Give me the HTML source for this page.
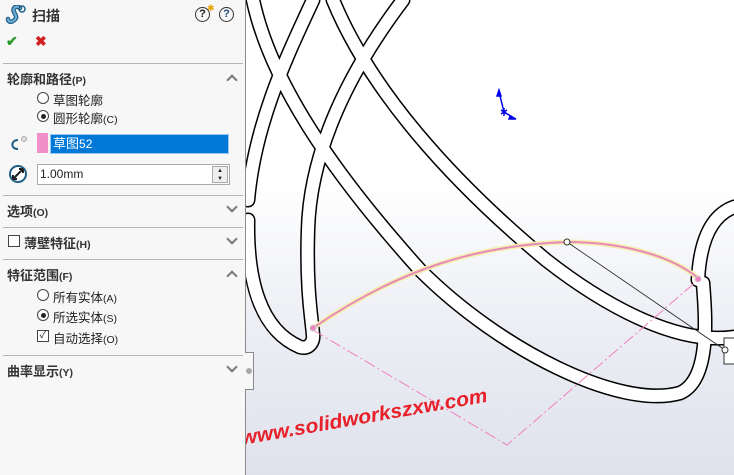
<!DOCTYPE html>
<html><head><meta charset="utf-8"><style>
*{margin:0;padding:0;box-sizing:border-box}
body{width:734px;height:475px;overflow:hidden;position:relative;font-family:"Liberation Sans","Noto Sans CJK SC",sans-serif;font-size:12.5px;color:#222}
#vp{position:absolute;left:246px;top:0;width:488px;height:475px;background:linear-gradient(#fff 0,#fff 180px,#eceef4 330px,#dfe2ec 475px)}
#panel{position:absolute;left:0;top:0;width:246px;height:475px;background:#f7f7f7;border-right:1px solid #8a8a8a}
#tab{position:absolute;left:245px;top:352px;width:9px;height:38px;background:#f7f7f7;border:1px solid #8a8a8a;border-left:none}
#tab i{position:absolute;left:1px;top:15px;width:6px;height:6px;border-radius:50%;background:#aaa}
.t{position:absolute;white-space:nowrap}
.b{font-weight:bold;color:#333;font-size:13px}
.s{font-size:10.5px;font-weight:bold}
.hr{position:absolute;left:3px;width:240px;height:1px;background:#b4b4b4}
.chev{position:absolute;left:228px;width:8px;height:8px;border-right:2px solid #777;border-bottom:2px solid #777}
.dn{transform:rotate(45deg)}
.up{transform:rotate(-135deg)}
.rad{position:absolute;left:37px;width:12px;height:12px;border:1px solid #444;border-radius:50%;background:#fff}
.rad.on::after{content:"";position:absolute;left:2.5px;top:2.5px;width:5px;height:5px;border-radius:50%;background:#222}
.cb{position:absolute;width:12px;height:12px;border:1px solid #444;background:#fff}
</style></head><body>
<div id="vp">
<svg width="488" height="475" viewBox="246 0 488 475" style="position:absolute;left:0;top:0">
<g fill="none" stroke-linecap="round">
<g stroke="#000" stroke-width="15">
<path id="a" d="M313,0 C290,50 255,120 248,200"/>
<path id="b" d="M253,0 C270,80 330,170 420,270 C500,350 620,410 680,393 C710,380 706,320 703,283"/>
<path id="c" d="M333,0 C370,90 450,180 546,260 C610,310 680,345 734,337"/>
<path id="d" d="M403,0 C350,70 310,150 308,230 C306,290 312,320 313,335"/>
<path id="e" d="M248,220 C247,280 260,330 300,347 C310,350 314,340 313,335"/>
<path id="f" d="M734,207 C712,215 700,240 698,280"/>
</g>
<g stroke="#fff" stroke-width="12">
<use href="#a"/><use href="#b"/><use href="#c"/><use href="#d"/><use href="#e"/><use href="#f"/>
</g>
</g>
<path d="M313,328 C400,268 480,245 567,242 C620,242 670,255 698,278" fill="none" stroke="#f4efb0" stroke-width="5"/>
<path d="M313,328 C400,268 480,245 567,242 C620,242 670,255 698,278" fill="none" stroke="#e88ab8" stroke-width="2"/>
<path d="M313,330 L507,445 L698,280" fill="none" stroke="#f080c0" stroke-width="1" stroke-dasharray="12,3,2,3"/>
<path d="M567,242 L725,350" stroke="#222" stroke-width="0.8"/>
<circle cx="567" cy="242" r="3" fill="#fff" stroke="#333"/>
<circle cx="313" cy="328" r="3" fill="#f080c0" stroke="#ccc"/>
<circle cx="698" cy="279" r="3" fill="#f080c0" stroke="#ccc"/>
<rect x="724" y="338" width="12" height="26" fill="#fff" stroke="#333"/>
<circle cx="725" cy="350" r="3" fill="#fff" stroke="#333"/>
<g stroke="#0000ee" stroke-width="1.5" fill="#0000ee">
<path d="M504,112 L499,92"/><path d="M504,112 L514,118"/>
<path d="M499,90 l-2,6 l4,0z"/><path d="M516,119 l-6,-3 l-1,3z"/>
<path d="M501,110 l6,4 M507,110 l-6,4 M504,108 v8"/>
</g>
<text x="242" y="445" transform="rotate(-10 242 445)" font-family="Liberation Sans,sans-serif" font-size="20" font-weight="bold" font-style="italic" fill="#e8202a" textLength="250" lengthAdjust="spacingAndGlyphs">www.solidworkszxw.com</text>
</svg>
</div>
<div id="panel">
<svg style="position:absolute;left:5px;top:5px" width="22" height="20" viewBox="0 0 22 20"><path d="M15,3 C11,0 7,3 9,7 C11,11 13,13 8,16 C5,18 3,16 3,14" fill="none" stroke="#1f5e86" stroke-width="4.5" stroke-linecap="round"/><path d="M15,3 C11,0 7,3 9,7 C11,11 13,13 8,16 C5,18 3,16 3,14" fill="none" stroke="#6fb0d8" stroke-width="2" stroke-linecap="round"/><circle cx="17" cy="4" r="3" fill="none" stroke="#1f5e86" stroke-width="1.5"/></svg>
<div class="t b" style="left:32px;top:6px;font-size:14px">扫描</div>
<div class="t" style="left:195px;top:7px;width:15px;height:15px;border:1.5px solid #333;border-radius:50%;font-size:11px;font-weight:bold;text-align:center;line-height:12px">?</div>
<div class="t" style="left:207px;top:3px;color:#e8a000;font-size:9px">✱</div>
<div class="t" style="left:219px;top:7px;width:15px;height:15px;border:1.5px solid #333;border-radius:50%;font-size:11px;font-weight:bold;text-align:center;line-height:12px;color:#1a4a80">?</div>
<div class="t" style="left:6px;top:33px;color:#2a9a2a;font-size:14px;font-weight:bold">✔</div>
<div class="t" style="left:35px;top:33px;color:#d42020;font-size:14px;font-weight:bold">✖</div>
<div class="hr" style="top:63px"></div>
<div class="t b" style="left:7px;top:69px">轮廓和路径<span class="s">(P)</span></div>
<div class="chev up" style="top:76px"></div>
<div class="rad" style="top:92px"></div><div class="t" style="left:53px;top:90px">草图轮廓</div>
<div class="rad on" style="top:110px"></div><div class="t" style="left:53px;top:108px">圆形轮廓<span style="font-size:10.5px">(C)</span></div>
<svg style="position:absolute;left:8px;top:134px" width="20" height="20"><path d="M10,6 C3,6 2,15 10,15" fill="none" stroke="#1f5e86" stroke-width="2"/><circle cx="16" cy="5" r="2.5" fill="#ddd" stroke="#aaa"/></svg>
<div class="t" style="left:37px;top:133px;width:11px;height:20px;background:#f090c8"></div>
<div class="t" style="left:50px;top:134px;width:179px;height:20px;background:#0078d7;border:1px solid #9cc8ef;color:#fff;font-size:13px;padding-left:2px;line-height:18px">草图<span style="font-size:12px">52</span></div>
<svg style="position:absolute;left:8px;top:164px" width="20" height="20"><circle cx="10" cy="10" r="8" fill="#fff" stroke="#1f5e86" stroke-width="2"/><path d="M5,15 L15,5 M5,15 l0,-4 M5,15 l4,0 M15,5 l-4,0 M15,5 l0,4" stroke="#222" stroke-width="2"/></svg>
<div class="t" style="left:37px;top:164px;width:193px;height:21px;background:#fff;border:1px solid #aaa;font-size:12px;padding-left:2px;line-height:19px">1.00mm</div>
<div class="t" style="left:212px;top:166px;width:16px;height:17px;border:1px solid #aaa;background:#eee;font-size:6px;text-align:center;line-height:8px">▲<br>▼</div>
<div class="hr" style="top:195px"></div>
<div class="t b" style="left:7px;top:201px">选项<span class="s">(O)</span></div>
<div class="chev dn" style="top:203px"></div>
<div class="hr" style="top:227px"></div>
<div class="cb" style="left:8px;top:235px"></div>
<div class="t b" style="left:24px;top:233px">薄壁特征<span class="s">(H)</span></div>
<div class="chev dn" style="top:235px"></div>
<div class="hr" style="top:259px"></div>
<div class="t b" style="left:7px;top:265px">特征范围<span class="s">(F)</span></div>
<div class="chev up" style="top:272px"></div>
<div class="rad" style="top:289px"></div><div class="t" style="left:53px;top:287px">所有实体<span style="font-size:10.5px">(A)</span></div>
<div class="rad on" style="top:309px"></div><div class="t" style="left:53px;top:307px">所选实体<span style="font-size:10.5px">(S)</span></div>
<div class="cb" style="left:37px;top:330px;font-size:10px;line-height:10px;text-align:center">✓</div><div class="t" style="left:53px;top:328px">自动选择<span style="font-size:10.5px">(O)</span></div>
<div class="hr" style="top:355px"></div>
<div class="t b" style="left:7px;top:361px">曲率显示<span class="s">(Y)</span></div>
<div class="chev dn" style="top:363px"></div>
</div>
<div id="tab"><i></i></div>
</body></html>
